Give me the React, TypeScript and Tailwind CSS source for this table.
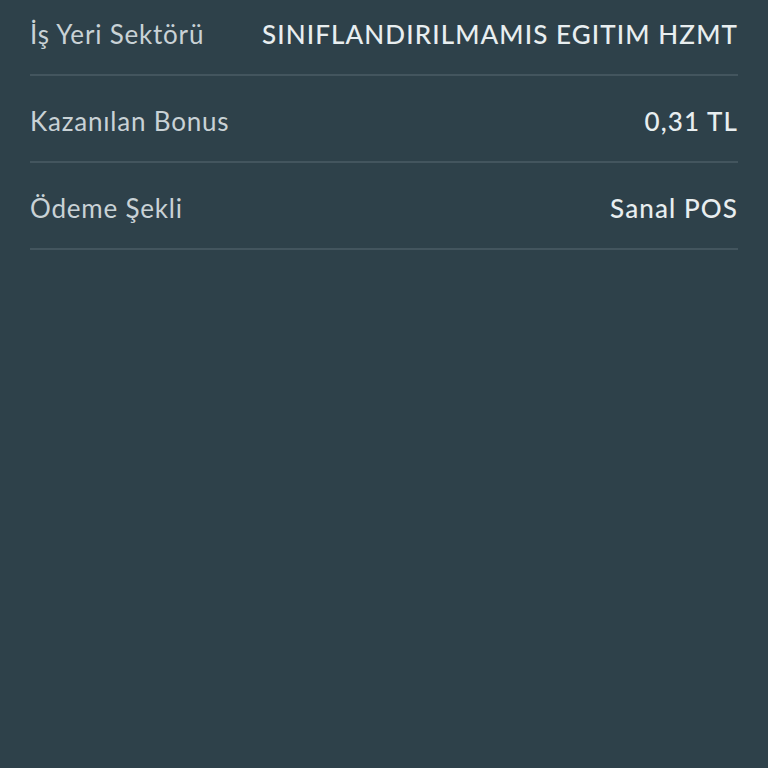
import React from 'react';

interface DetailRow {
  label: string;
  value: string;
}

const rows: DetailRow[] = [
  { label: 'İş Yeri Sektörü', value: 'SINIFLANDIRILMAMIS EGITIM HZMT' },
  { label: 'Kazanılan Bonus', value: '0,31 TL' },
  { label: 'Ödeme Şekli', value: 'Sanal POS' },
];

export default function App() {
  return (
    <div
      className="w-[768px] h-[768px] overflow-hidden bg-[#2e414a] px-[30px]"
      style={{ fontFamily: 'Lato, "Noto Sans", sans-serif' }}
    >
      <div className="-mt-[11px]">
        {rows.map((row) => (
          <div
            key={row.label}
            className="flex items-center justify-between h-[87px] pt-[5px] border-b-2 border-[#43555e]"
          >
            <span className="text-[26px] tracking-[0.8px] text-[#c9d2d6] whitespace-nowrap">{row.label}</span>
            <span className="text-[26px] tracking-[1.1px] font-medium text-[#e8eef0] whitespace-nowrap">
              {row.value}
            </span>
          </div>
        ))}
      </div>
    </div>
  );
}
